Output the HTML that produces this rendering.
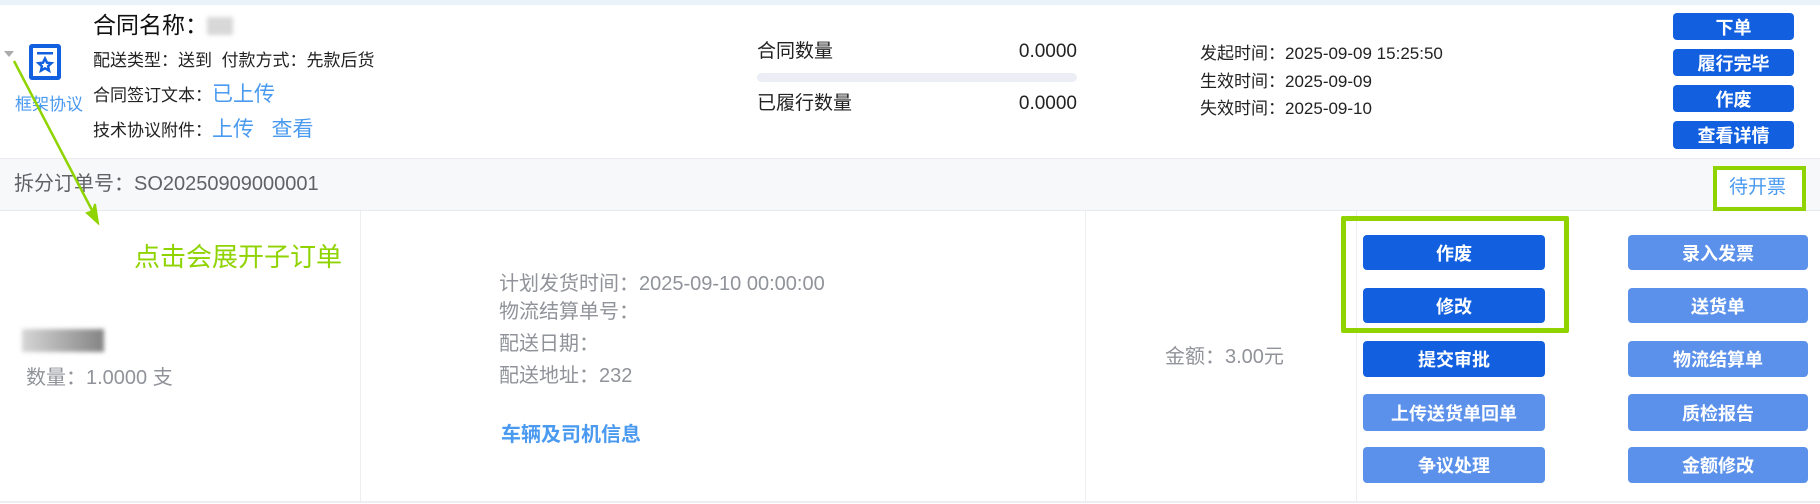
<!DOCTYPE html>
<html><head><meta charset="utf-8"><style>
*{margin:0;padding:0;box-sizing:border-box}
body{width:1820px;height:504px;position:relative;overflow:hidden;background:#fff;font-family:"Liberation Sans","Noto Sans CJK SC",sans-serif;color:#222}
.a{position:absolute;white-space:nowrap;line-height:1}
.b{position:absolute;color:#fff;font-weight:bold;font-size:18px;display:flex;align-items:center;justify-content:center;border-radius:4px}
.d{background:#1260e0}.l{background:#5c91eb}
.g{color:#909399}
</style></head><body>
<div style="position:absolute;left:0;top:0;width:1820px;height:5px;background:#eaf2fa"></div>
<div style="position:absolute;left:0;top:158px;width:1820px;height:53px;background:#f7f8fa;border-top:1px solid #e8eaee;border-bottom:1px solid #e8eaee"></div>
<div style="position:absolute;left:360px;top:211px;width:1px;height:291px;background:#eceef2"></div>
<div style="position:absolute;left:1085px;top:211px;width:1px;height:291px;background:#eceef2"></div>
<div style="position:absolute;left:1356px;top:211px;width:1px;height:291px;background:#eceef2"></div>
<div style="position:absolute;left:0;top:501px;width:1820px;height:2px;background:#eceef2"></div>

<div style="position:absolute;left:4px;top:51px;width:0;height:0;border-left:5px solid transparent;border-right:5px solid transparent;border-top:6px solid #aaa"></div>
<svg style="position:absolute;left:29px;top:44px" width="32" height="36" viewBox="0 0 32 36"><rect x="2" y="2" width="28" height="32" rx="1" fill="none" stroke="#1260e0" stroke-width="4"/><rect x="8" y="8" width="16" height="2.5" fill="#1260e0"/><path d="M16 14.5l2 4.2 4.5.5-3.4 3 1 4.5-4.1-2.4-4.1 2.4 1-4.5-3.4-3 4.5-.5z" fill="none" stroke="#1260e0" stroke-width="2.4"/></svg>
<div class="a" style="left:15px;top:96px;font-size:17px;color:#4a9af0">框架协议</div>

<div class="a" style="left:93px;top:14px;font-size:23px;color:#111">合同名称：</div>
<div style="position:absolute;left:207px;top:17px;width:26px;height:18px;background:#d8d8d8;filter:blur(2px)"></div>
<div class="a" style="left:93px;top:52px;font-size:17px">配送类型：送到&nbsp;&nbsp;付款方式：先款后货</div>
<div class="a" style="left:93px;top:84px;font-size:17px">合同签订文本：<span style="color:#4a9af0;font-size:21px">已上传</span></div>
<div class="a" style="left:93px;top:119px;font-size:17px">技术协议附件：<span style="color:#4a9af0;font-size:21px">上传&nbsp;&nbsp;&nbsp;查看</span></div>

<div class="a" style="left:757px;top:42px;font-size:19px">合同数量</div>
<div class="a" style="left:950px;top:42px;width:127px;text-align:right;font-size:19px">0.0000</div>
<div style="position:absolute;left:757px;top:73px;width:320px;height:9px;border-radius:5px;background:#ebeef5"></div>
<div class="a" style="left:757px;top:94px;font-size:19px">已履行数量</div>
<div class="a" style="left:950px;top:94px;width:127px;text-align:right;font-size:19px">0.0000</div>

<div class="a" style="left:1200px;top:45px;font-size:17px">发起时间：2025-09-09 15:25:50</div>
<div class="a" style="left:1200px;top:73px;font-size:17px">生效时间：2025-09-09</div>
<div class="a" style="left:1200px;top:100px;font-size:17px">失效时间：2025-09-10</div>

<div class="b d" style="left:1673px;top:13px;width:121px;height:27px">下单</div>
<div class="b d" style="left:1673px;top:49px;width:121px;height:27px">履行完毕</div>
<div class="b d" style="left:1673px;top:85px;width:121px;height:27px">作废</div>
<div class="b d" style="left:1673px;top:121px;width:121px;height:28px">查看详情</div>

<div class="a" style="left:14px;top:174px;font-size:20px;color:#606266">拆分订单号：SO20250909000001</div>
<div style="position:absolute;left:1713px;top:166px;width:93px;height:45px;border:4px solid #8fd400;background:#fff"></div>
<div class="a" style="left:1729px;top:178px;font-size:19px;color:#4a9af0">待开票</div>

<div class="a" style="left:134px;top:244px;font-size:26px;color:#8fd400">点击会展开子订单</div>
<div style="position:absolute;left:22px;top:329px;width:82px;height:23px;background:linear-gradient(90deg,#ccc,#999,#666);filter:blur(2px);opacity:.8"></div>
<div class="a" style="left:26px;top:368px;font-size:20px"><span class="g">数量：1.0000 支</span></div>

<div class="a g" style="left:499px;top:274px;font-size:20px">计划发货时间：2025-09-10 00:00:00</div>
<div class="a g" style="left:499px;top:302px;font-size:20px">物流结算单号：</div>
<div class="a g" style="left:499px;top:334px;font-size:20px">配送日期：</div>
<div class="a g" style="left:499px;top:366px;font-size:20px">配送地址：232</div>
<div class="a" style="left:501px;top:425px;font-size:20px;color:#4a9af0;font-weight:bold">车辆及司机信息</div>

<div class="a g" style="left:1165px;top:347px;font-size:20px">金额：3.00元</div>

<div class="b d" style="left:1363px;top:235px;width:182px;height:35px">作废</div>
<div class="b d" style="left:1363px;top:288px;width:182px;height:35px">修改</div>
<div class="b d" style="left:1363px;top:341px;width:182px;height:36px">提交审批</div>
<div class="b l" style="left:1363px;top:394px;width:182px;height:37px">上传送货单回单</div>
<div class="b l" style="left:1363px;top:447px;width:182px;height:36px">争议处理</div>
<div class="b l" style="left:1628px;top:235px;width:180px;height:35px">录入发票</div>
<div class="b l" style="left:1628px;top:288px;width:180px;height:35px">送货单</div>
<div class="b l" style="left:1628px;top:341px;width:180px;height:36px">物流结算单</div>
<div class="b l" style="left:1628px;top:394px;width:180px;height:37px">质检报告</div>
<div class="b l" style="left:1628px;top:447px;width:180px;height:36px">金额修改</div>
<div style="position:absolute;left:1341px;top:216px;width:228px;height:117px;border:5px solid #8fd400;border-radius:2px"></div>

<svg style="position:absolute;left:0;top:0" width="200" height="240"><line x1="14" y1="61" x2="94" y2="214" stroke="#8fd400" stroke-width="2.5"/><path d="M98 223l-11-10 6-2 2-7z" fill="#8fd400" stroke="#8fd400" stroke-width="2"/></svg>
</body></html>
